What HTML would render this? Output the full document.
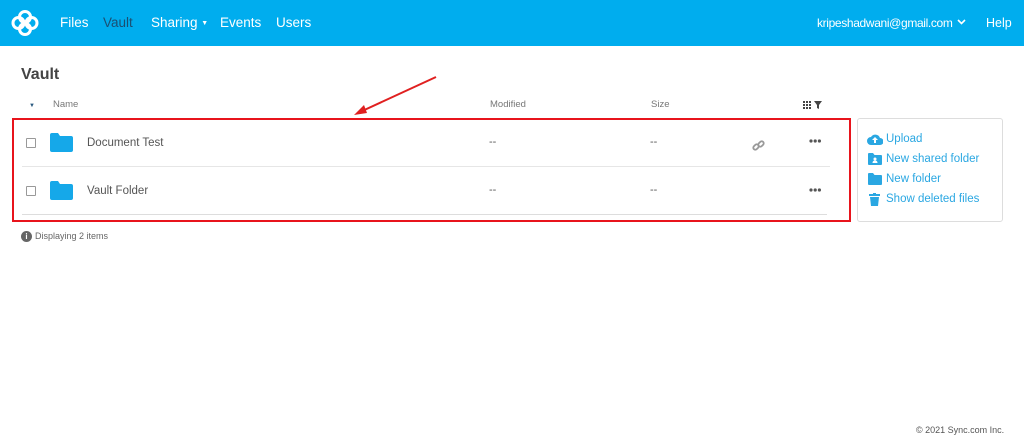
<!DOCTYPE html>
<html><head><style>
*{margin:0;padding:0;box-sizing:border-box}
body{width:1024px;height:440px;background:#fff;font-family:"Liberation Sans",sans-serif;position:relative;overflow:hidden;color:#555}
.nav{position:absolute;left:0;top:0;width:1024px;height:46px;background:#00adee}
.nav span{position:absolute;top:15px;font-size:13.5px;color:#fff}
.a{position:absolute}
.t{position:absolute;font-size:11.5px;color:#555}
.h{position:absolute;font-size:9.5px;color:#777}
.cb{position:absolute;width:10px;height:10px;border:1px solid #999;border-radius:1px;background:#fff}
.lk{position:absolute;font-size:11.5px;color:#2aa7e2}
</style></head><body>
<div class="nav">
<svg class="a" style="left:10px;top:9px" width="30" height="28" viewBox="0 0 30 28"><g fill="none" stroke="#fff" stroke-width="3"><circle cx="15" cy="8" r="5.5"/><circle cx="15" cy="20" r="5.5"/><circle cx="8.5" cy="14" r="5.5"/><circle cx="21.5" cy="14" r="5.5"/></g></svg>
<span style="left:60px">Files</span>
<span style="left:103px;color:#1b4f72">Vault</span>
<span style="left:151px">Sharing <small style="font-size:7px;vertical-align:2px">▼</small></span>
<span style="left:220px">Events</span>
<span style="left:276px">Users</span>
<span style="left:817px;font-size:12px;letter-spacing:-0.35px;top:16px">kripeshadwani@gmail.com</span>
<svg class="a" style="left:957px;top:19px" width="9" height="7"><path d="M1 1l3.5 3.5L8 1" stroke="#fff" stroke-width="1.6" fill="none"/></svg>
<span style="left:986px;font-size:12.5px;top:16px">Help</span>
</div>
<div class="a" style="left:21px;top:66px;font-size:16px;font-weight:bold;color:#444">Vault</div>
<div class="a" style="left:29px;top:103px;font-size:6px;color:#2a5a80">▼</div>
<div class="h" style="left:53px;top:99px">Name</div>
<div class="h" style="left:490px;top:99px">Modified</div>
<div class="h" style="left:651px;top:99px">Size</div>
<svg class="a" style="left:803px;top:100px" width="20" height="9"><g fill="#444"><rect x="0" y="1" width="2" height="2"/><rect x="3" y="1" width="2" height="2"/><rect x="6" y="1" width="2" height="2"/><rect x="0" y="4" width="2" height="2"/><rect x="3" y="4" width="2" height="2"/><rect x="6" y="4" width="2" height="2"/><rect x="0" y="7" width="2" height="2"/><rect x="3" y="7" width="2" height="2"/><rect x="6" y="7" width="2" height="2"/><path d="M11 1h8l-3 4v4l-2-1v-3z"/></g></svg>
<svg class="a" style="left:350px;top:74px" width="90" height="44"><line x1="86" y1="3" x2="10" y2="38" stroke="#e02020" stroke-width="2"/><polygon points="4,41 14,31 17,39" fill="#e02020"/></svg>
<div class="a" style="left:12px;top:118px;width:839px;height:104px;border:2px solid #e8141c"></div>
<div class="a" style="left:22px;top:166px;width:808px;height:1px;background:#e6e6e6"></div>
<div class="a" style="left:22px;top:214px;width:805px;height:1px;background:#ddd"></div>
<div class="cb" style="left:26px;top:138px"></div>
<div class="cb" style="left:26px;top:186px"></div>
<svg class="a" style="left:50px;top:133px" width="23" height="19"><path d="M0 2q0-2 2-2h6l2 3h11q2 0 2 2v12q0 2-2 2H2q-2 0-2-2z" fill="#15a8e9"/></svg>
<svg class="a" style="left:50px;top:181px" width="23" height="19"><path d="M0 2q0-2 2-2h6l2 3h11q2 0 2 2v12q0 2-2 2H2q-2 0-2-2z" fill="#15a8e9"/></svg>
<div class="t" style="left:87px;top:137px">Document Test</div>
<div class="t" style="left:87px;top:185px">Vault Folder</div>
<div class="t" style="left:489px;top:136px;font-size:11px">--</div>
<div class="t" style="left:650px;top:136px;font-size:11px">--</div>
<div class="t" style="left:489px;top:184px;font-size:11px">--</div>
<div class="t" style="left:650px;top:184px;font-size:11px">--</div>
<svg class="a" style="left:752px;top:139px" width="13" height="13" viewBox="0 0 13 13"><g fill="none" stroke="#999" stroke-width="1.8"><rect x="1" y="6" width="6" height="4" rx="2" transform="rotate(-45 4 8)"/><rect x="6" y="3" width="6" height="4" rx="2" transform="rotate(-45 9 5)"/></g></svg>
<svg class="a" style="left:809px;top:139px" width="13" height="4"><g fill="#555"><circle cx="2" cy="2" r="1.6"/><circle cx="6.2" cy="2" r="1.6"/><circle cx="10.4" cy="2" r="1.6"/></g></svg>
<svg class="a" style="left:809px;top:188px" width="13" height="4"><g fill="#555"><circle cx="2" cy="2" r="1.6"/><circle cx="6.2" cy="2" r="1.6"/><circle cx="10.4" cy="2" r="1.6"/></g></svg>
<div class="a" style="left:857px;top:118px;width:146px;height:104px;border:1px solid #ddd;border-radius:3px"></div>
<svg class="a" style="left:867px;top:133px" width="16" height="12"><path d="M4 12a4 4 0 0 1 0-8a5 5 0 0 1 9 1a3.5 3.5 0 0 1 0 7z" fill="#2aa7e2"/><path d="M8 4l-3 3h2v3h2v-3h2z" fill="#fff"/></svg>
<div class="lk" style="left:886px;top:133px">Upload</div>
<svg class="a" style="left:868px;top:153px" width="14" height="12"><path d="M0 1q0-1 1-1h4l1.5 2H13q1 0 1 1v8q0 1-1 1H1q-1 0-1-1z" fill="#2aa7e2"/><circle cx="7" cy="6" r="1.5" fill="#fff"/><path d="M4.5 10q0-2.5 2.5-2.5T9.5 10z" fill="#fff"/></svg>
<div class="lk" style="left:886px;top:153px">New shared folder</div>
<svg class="a" style="left:868px;top:173px" width="14" height="12"><path d="M0 1q0-1 1-1h4l1.5 2H13q1 0 1 1v8q0 1-1 1H1q-1 0-1-1z" fill="#2aa7e2"/></svg>
<div class="lk" style="left:886px;top:173px">New folder</div>
<svg class="a" style="left:869px;top:193px" width="11" height="13"><rect x="0" y="1" width="11" height="2" fill="#2aa7e2"/><rect x="4" y="0" width="3" height="2" fill="#2aa7e2"/><path d="M1 4h9l-1 9H2z" fill="#2aa7e2"/></svg>
<div class="lk" style="left:886px;top:193px">Show deleted files</div>
<div class="a" style="left:21px;top:231px;width:11px;height:11px;border-radius:50%;background:#666;color:#fff;font-size:8px;text-align:center;line-height:11px;font-weight:bold">i</div>
<div class="a" style="left:35px;top:231px;font-size:9px;color:#666">Displaying 2 items</div>
<div class="a" style="left:916px;top:425px;font-size:9px;color:#555">© 2021 Sync.com Inc.</div>
</body></html>
